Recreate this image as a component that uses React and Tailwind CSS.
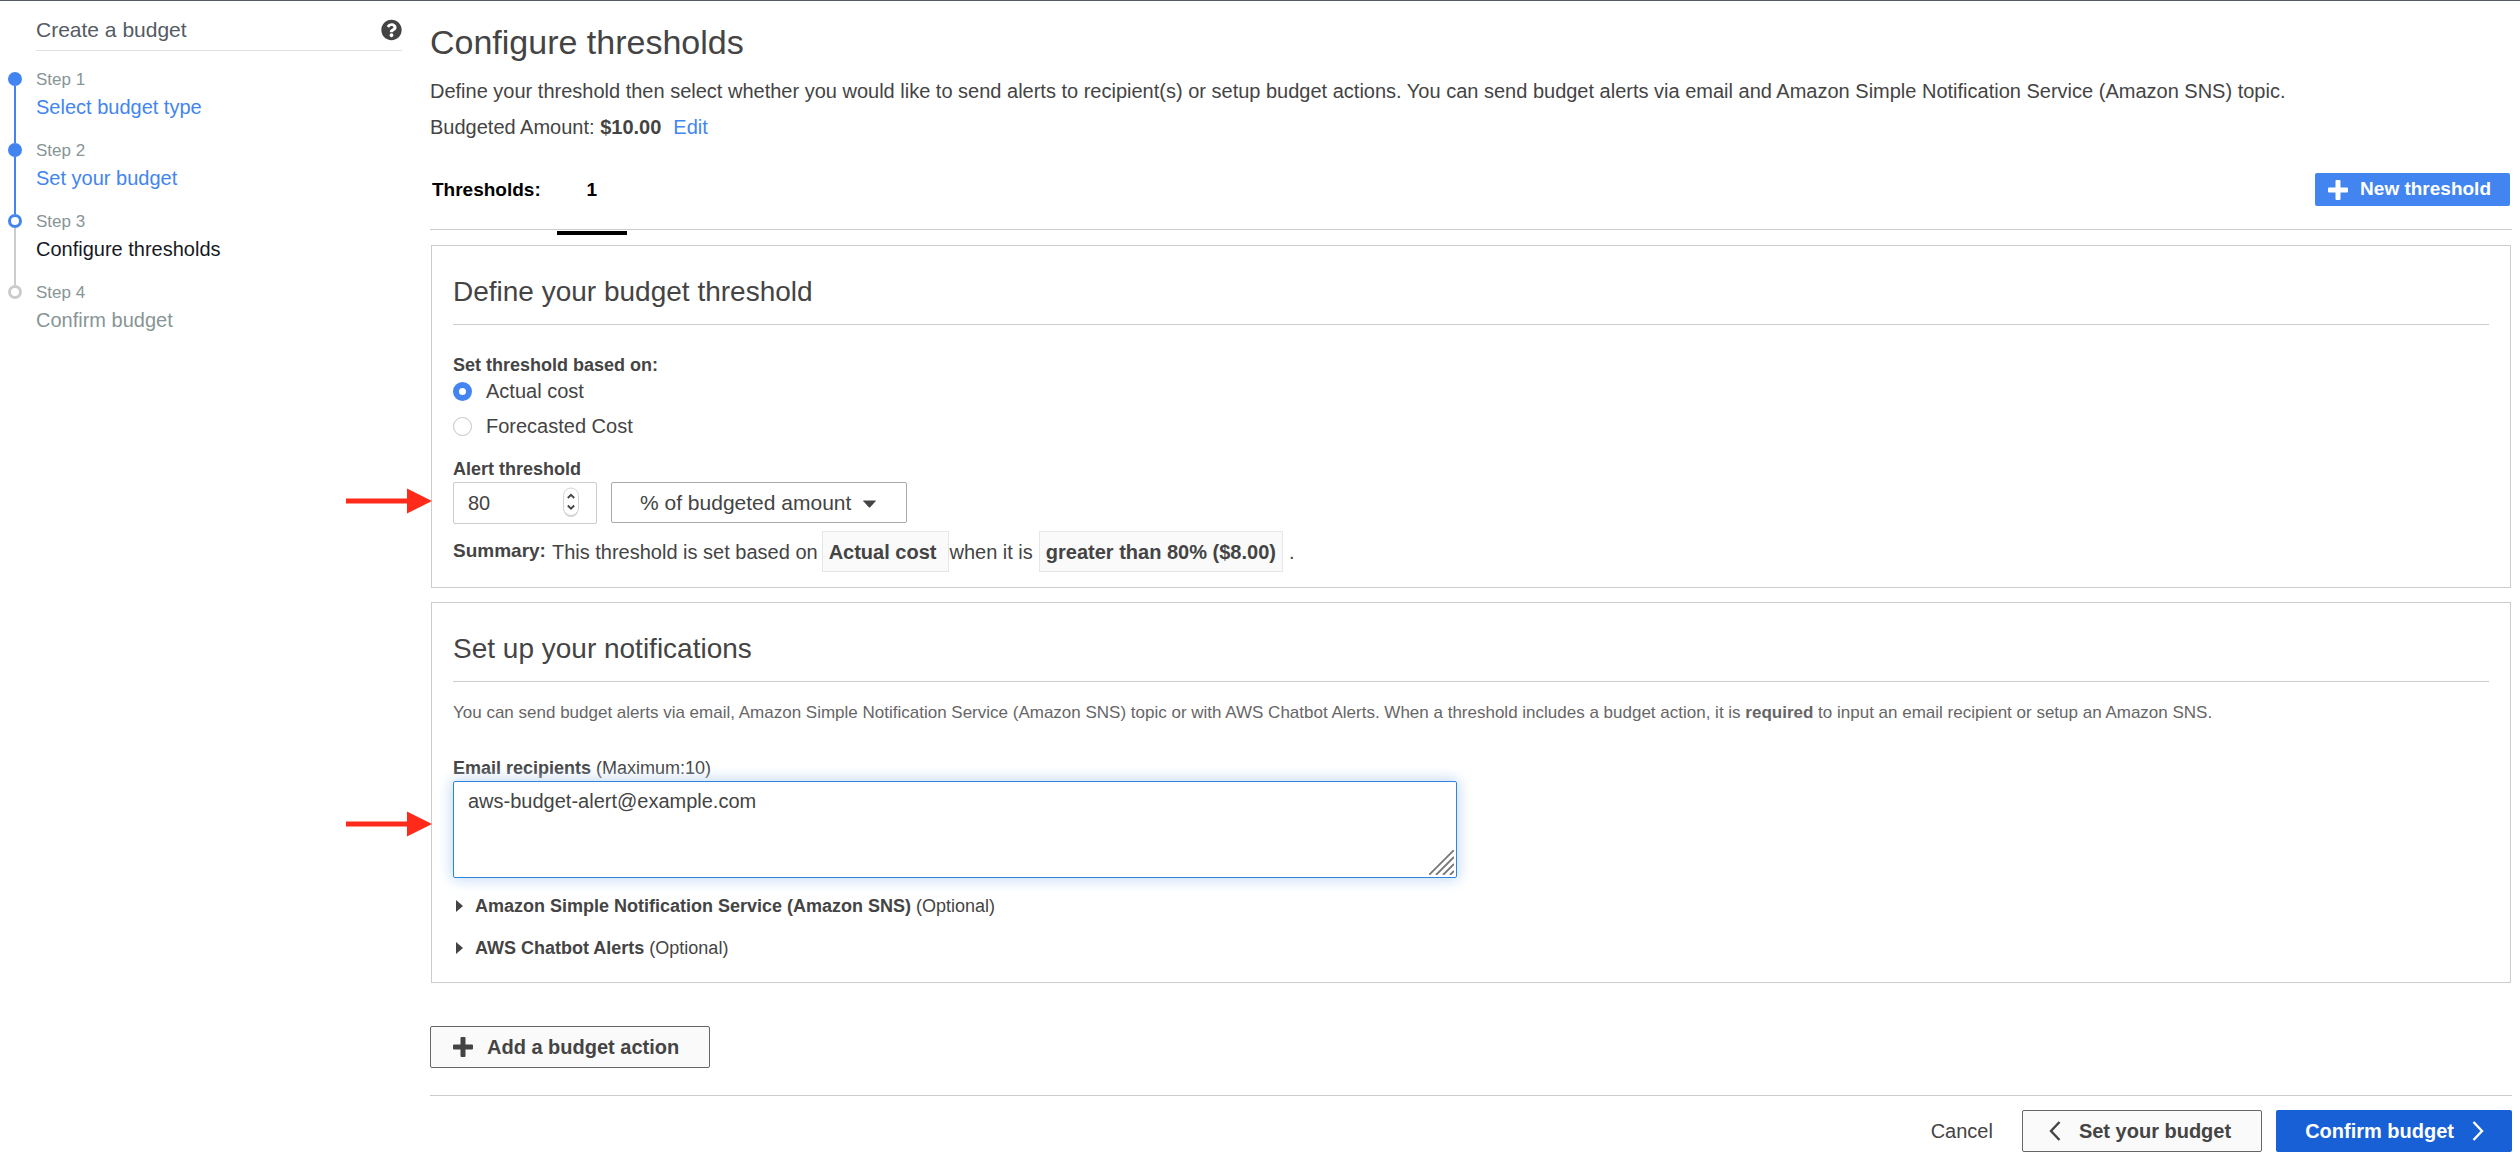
import { useState } from 'react';
import clsx from 'clsx';

const steps = [
  { label: 'Step 1', title: 'Select budget type', state: 'done' },
  { label: 'Step 2', title: 'Set your budget', state: 'done' },
  { label: 'Step 3', title: 'Configure thresholds', state: 'current' },
  { label: 'Step 4', title: 'Confirm budget', state: 'todo' },
];

const HelpIcon = () => (
  <svg width="21" height="22" viewBox="0 0 512 512" fill="#444444" aria-hidden="true">
    <path d="M504 256c0 137-111 248-248 248S8 393 8 256C8 119.100 119 8 256 8s248 111.100 248 248zM262.700 90c-54.500 0-89.300 23-116.500 63.800-3.500 5.300-2.400 12.400 2.700 16.300l34.700 26.300c5.200 3.900 12.600 3 16.700-2.100 17.900-22.700 30.100-35.800 57.300-35.800 20.400 0 45.700 13.100 45.700 33 0 15-12.400 22.700-32.500 34C247.100 238.500 216 254.900 216 296v4c0 6.600 5.400 12 12 12h56c6.600 0 12-5.400 12-12v-1.300c0-28.500 83.200-29.600 83.200-106.700 0-58-60.200-102-116.500-102zM256 338c-25.400 0-46 20.600-46 46 0 25.400 20.600 46 46 46s46-20.600 46-46c0-25.400-20.600-46-46-46z" />
  </svg>
);

const PlusIcon = () => (
  <svg width="20" height="20" viewBox="0 0 20 20" fill="currentColor" aria-hidden="true">
    <path d="M8.500 0h3q1 0 1 1v6.500H19q1 0 1 1v3q0 1-1 1h-6.500V19q0 1-1 1h-3q-1 0-1-1v-6.500H1q-1 0-1-1v-3q0-1 1-1h6.500V1q0-1 1-1z" />
  </svg>
);

const Chevron = ({ d }) => (
  <svg width="12" height="20" viewBox="0 0 12 20" fill="none" stroke="currentColor" strokeWidth="2.400" aria-hidden="true">
    <path d={d} />
  </svg>
);

const RedArrow = ({ className }) => (
  <svg className={clsx('pointer-events-none absolute -left-[107px]', className)} width="86" height="26" viewBox="0 0 86 26" fill="#ff2a1a" aria-hidden="true">
    <path d="M0 10.500h61V.500L86 13 61 25.500v-10H0z" />
  </svg>
);

const Card = ({ title, className, children }) => (
  <section className={clsx('mx-px border border-[#cccccc] px-[21px] pt-7', className)}>
    <h2 className="border-b border-[#cccccc] pb-3.5 text-[28px] leading-9">{title}</h2>
    {children}
  </section>
);

const Radio = ({ label, ...props }) => (
  <label className="flex w-fit items-center gap-3.5 leading-7">
    <input
      type="radio"
      name="basis"
      className="size-[19px] appearance-none rounded-full border border-[#c4c4c4] bg-white checked:border-[6px] checked:border-[#4285f0]"
      {...props}
    />
    {label}
  </label>
);

const Optional = ({ title, className }) => (
  <details className={clsx('group text-[18px] leading-6', className)}>
    <summary className="flex w-fit cursor-pointer list-none items-center">
      <svg className="mr-3 ml-[3px] group-open:rotate-90" width="7" height="12" viewBox="0 0 7 12" fill="currentColor" aria-hidden="true">
        <path d="M0 0l7 6-7 6z" />
      </svg>
      <span><b>{title}</b> (Optional)</span>
    </summary>
  </details>
);

const Sidebar = () => (
  <aside className="w-[402px] shrink-0 pl-2">
    <div className="ml-7 flex items-center justify-between border-b border-[#e1e1e1] pt-4 pb-2 text-[21px] leading-[25px] text-[#545b64]">
      <span>Create a budget</span>
      <button type="button" aria-label="Help"><HelpIcon /></button>
    </div>
    <ol className="mt-4">
      {steps.map(({ label, title, state }, i) => (
        <li key={label} className="flex h-[71px] gap-3.5">
          <div className="flex w-3.5 flex-col items-center pt-[5px]">
            <span
              className={clsx(
                'size-3.5 shrink-0 rounded-full border-[3px]',
                state === 'done' && 'border-[#4285f0] bg-[#4285f0]',
                state === 'current' && 'border-[#4285f0] bg-white',
                state === 'todo' && 'border-[#cccccc] bg-white'
              )}
            />
            {i < steps.length - 1 && (
              <span className={clsx('-mb-[5px] w-[2px] flex-1', state === 'done' ? 'bg-[#4285f0]' : 'bg-[#cccccc]')} />
            )}
          </div>
          <div>
            <p className="text-[17px] leading-[26px] text-[#879596]">{label}</p>
            {state === 'done' ? (
              <a href="#" className="block leading-7 text-[#4285f0]">{title}</a>
            ) : (
              <p className={clsx('leading-7', state === 'current' ? 'text-[#16191f]' : 'text-[#879596]')}>{title}</p>
            )}
          </div>
        </li>
      ))}
    </ol>
  </aside>
);

export default function App() {
  const [basis, setBasis] = useState('actual');
  const [amount, setAmount] = useState('80');
  const [emails, setEmails] = useState('aws-budget-alert@example.com');

  return (
    <div className="flex min-h-screen gap-7 border-t border-[#545b64] bg-white pr-2 font-['Liberation_Sans',Arial,sans-serif] text-[20px] text-[#444444]">
      <Sidebar />

      <main className="min-w-0 flex-1 pt-[21px] pb-5">
        <h1 className="text-[34px] leading-10">Configure thresholds</h1>
        <p className="mt-[15px] leading-7">
          Define your threshold then select whether you would like to send alerts to recipient(s) or setup budget actions. You can send budget alerts via email and Amazon Simple Notification Service (Amazon SNS) topic.
        </p>
        <p className="mt-2 leading-7">
          Budgeted Amount: <b>$10.00</b>
          <a href="#" className="ml-3 text-[#4285f0]">Edit</a>
        </p>

        {/* Threshold tabs */}
        <div className="mt-8 flex items-center border-b border-[#cccccc] pb-[23px] text-[19px] font-bold text-black">
          <span className="ml-0.5 pt-0.5">Thresholds:</span>
          <button type="button" className="relative ml-4 h-[33px] w-[70px] pt-0.5">
            1
            <span className="absolute top-[58px] left-0 h-1 w-full bg-black" />
          </button>
          <button type="button" className="mr-0.5 ml-auto flex h-[33px] items-center gap-3 rounded-[2px] bg-[#4285f0] pr-[19px] pl-[13px] text-white">
            <PlusIcon />
            New threshold
          </button>
        </div>

        <Card title="Define your budget threshold" className="mt-[15px] pb-[15px]">
          <fieldset className="mt-7">
            <legend className="text-[18px] leading-6 font-bold">Set threshold based on:</legend>
            <Radio label="Actual cost" checked={basis === 'actual'} onChange={() => setBasis('actual')} />
            <div className="mt-[7px]">
              <Radio label="Forecasted Cost" checked={basis === 'forecast'} onChange={() => setBasis('forecast')} />
            </div>
          </fieldset>

          <label htmlFor="amount" className="mt-[17px] block text-[18px] leading-6 font-bold">Alert threshold</label>
          <div className="relative mt-px flex gap-3.5">
            <RedArrow className="top-1.5" />
            <div className="relative">
              <input
                id="amount"
                type="number"
                value={amount}
                onChange={(e) => setAmount(e.target.value)}
                className="h-[42px] w-36 rounded-[2px] border border-[#cccccc] pl-3.5 [appearance:textfield]"
              />
              <svg className="pointer-events-none absolute top-[5px] right-[18px]" width="16" height="31" viewBox="0 0 16 31" fill="none" aria-hidden="true">
                <rect x=".500" y="2" width="15" height="28" rx="7.500" fill="#d0d0d0" />
                <rect x=".500" y="1" width="15" height="27.500" rx="7.500" fill="#fff" stroke="#d4d4d4" />
                <path d="M4.800 11L8 7.800l3.200 3.200M4.800 18.500L8 21.700l3.200-3.200" stroke="#444444" strokeWidth="1.800" />
              </svg>
            </div>
            <div className="relative">
              <select aria-label="Threshold unit" className="h-[41px] w-[296px] appearance-none rounded-[2px] border border-[#aaaaaa] bg-white pl-7 text-[21px]">
                <option>% of budgeted amount</option>
                <option>Absolute value</option>
              </select>
              <svg className="pointer-events-none absolute top-[18px] right-[31px]" width="13" height="8" viewBox="0 0 13 8" fill="currentColor" aria-hidden="true">
                <path d="M.500.500h12q.500.300.100.800L7.200 7.200q-.700.700-1.400 0L.400 1.300Q0 .800.500.500z" />
              </svg>
            </div>
          </div>

          <p className="mt-[7px] flex h-[41px] items-center">
            <b className="mr-1.5 text-[19px]">Summary:</b>
            This threshold is set based on
            <b className="ml-1 flex h-full items-center border border-[#e6e6e6] bg-[#fafafa] pr-3 pl-1.5">Actual cost</b>
            when it is
            <b className="ml-1.5 flex h-full items-center border border-[#e6e6e6] bg-[#fafafa] px-1.5">greater than 80% ($8.00)</b>
            <span className="ml-1.5">.</span>
          </p>
        </Card>

        <Card title="Set up your notifications" className="mt-3.5 pb-[22px]">
          <p className="mt-[19px] text-[17px] leading-6 text-[#666666]">
            You can send budget alerts via email, Amazon Simple Notification Service (Amazon SNS) topic or with AWS Chatbot Alerts. When a threshold includes a budget action, it is <b>required</b> to input an email recipient or setup an Amazon SNS.
          </p>
          <label htmlFor="emails" className="mt-[31px] block text-[18px] leading-6">
            <b>Email recipients</b> (Maximum:10)
          </label>
          <div className="relative mt-px w-[1004px] max-w-full">
            <RedArrow className="top-[30px]" />
            <textarea
              id="emails"
              value={emails}
              onChange={(e) => setEmails(e.target.value)}
              className="block h-[97px] w-full resize-none rounded-[2px] border border-[#3184dc] px-3.5 py-[5px] leading-7 shadow-[0_0_14px_2px_#c5dcf6] outline-none"
            />
            <svg className="pointer-events-none absolute right-[3px] bottom-[3px]" width="25" height="25" viewBox="0 0 25 25" fill="none" stroke="#777777" strokeWidth="1.800" aria-hidden="true">
              <path d="M0 25L25 0M7 25L25 7M14 25L25 14M21 25l4-4" />
            </svg>
          </div>
          <Optional title="Amazon Simple Notification Service (Amazon SNS)" className="mt-4" />
          <Optional title="AWS Chatbot Alerts" className="mt-[18px]" />
        </Card>

        <button type="button" className="mt-[43px] flex h-[42px] items-center gap-3.5 rounded-[2px] border border-[#666666] bg-[#fafafa] pr-[30px] pl-[22px] font-bold">
          <PlusIcon />
          Add a budget action
        </button>

        {/* Wizard navigation */}
        <footer className="mt-[27px] flex items-center justify-end gap-3.5 border-t border-[#cccccc] pt-3.5">
          <button type="button" className="mr-[15px]">Cancel</button>
          <button type="button" className="flex h-[42px] items-center gap-[18px] rounded-[2px] border border-[#666666] bg-[#fafafa] pr-[30px] pl-[26px] font-bold">
            <Chevron d="M10.500 1L2 10l8.500 9" />
            Set your budget
          </button>
          <button type="button" className="flex h-[42px] items-center gap-[18px] rounded-[2px] bg-[#1860d6] pr-7 pl-[29px] font-bold text-white">
            Confirm budget
            <Chevron d="M1.500 1L10 10 1.500 19" />
          </button>
        </footer>
      </main>
    </div>
  );
}
